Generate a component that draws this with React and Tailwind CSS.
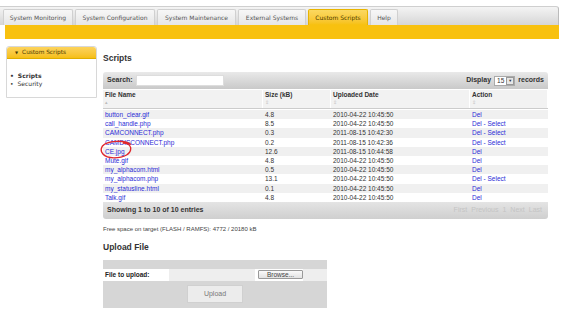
import React from 'react';

const tabs = [
  { label: 'System Monitoring', w: 'w-[70px]' },
  { label: 'System Configuration', w: 'w-[80px]' },
  { label: 'System Maintenance', w: 'w-[79px]' },
  { label: 'External Systems', w: 'w-[68px]' },
  { label: 'Custom Scripts', w: 'w-[60px]', active: true },
  { label: 'Help', w: 'w-[28px]' },
];

const rows = [
  ['button_clear.gif', '4.8', '2010-04-22 10:45:50', false],
  ['call_handle.php', '8.5', '2010-04-22 10:45:50', true],
  ['CAMCONNECT.php', '0.3', '2011-08-15 10:42:30', true],
  ['CAMDISCONNECT.php', '0.2', '2011-08-15 10:42:36', true],
  ['CE.jpg', '12.6', '2011-08-15 10:44:58', false],
  ['Mute.gif', '4.8', '2010-04-22 10:45:50', false],
  ['my_alphacom.html', '0.5', '2010-04-22 10:45:50', false],
  ['my_alphacom.php', '13.1', '2010-04-22 10:45:50', true],
  ['my_statusline.html', '0.1', '2010-04-22 10:45:50', false],
  ['Talk.gif', '4.8', '2010-04-22 10:45:50', false],
];

const cols = ['w-[160px]', 'w-[68px]', 'w-[139px]', 'w-[78px]'];

export default function App() {
  return (
    <div className="w-[561px] h-[311px] bg-white overflow-hidden font-['Liberation_Sans',Arial,sans-serif] text-[#222]">
      {/* TOP TABS */}
      <div className="pt-[6px] pr-[2px]">
        <div className="flex items-end h-[19px] bg-gradient-to-b from-[#f4f4f4] to-[#d6d6d6] border-t border-[#cfcfcf] border-r border-r-[#bbb] rounded-tr-[3px] pl-[3px] font-['DejaVu_Sans',Verdana,sans-serif] text-[6px]">
          {tabs.map(t => (
            <div
              key={t.label}
              className={`${t.w} h-[16px] mr-[2px] flex items-center justify-center rounded-t-[2px] border border-b-0 whitespace-nowrap ${t.active ? 'bg-gradient-to-b from-[#fbd860] to-[#f7c10a] border-[#e8b400] text-[#4a3a00]' : 'bg-gradient-to-b from-[#f7f7f7] to-[#e6e6e6] border-[#d0d0d0] text-[#555]'}`}
            >
              {t.label}
            </div>
          ))}
        </div>
        <div className="ml-[5px] h-[14px] bg-[#f8c10f]" />
      </div>

      <div className="flex gap-[6px] pl-[6px] pt-[7px]">
        {/* SIDEBAR */}
        <div className="w-[91px] shrink-0">
          <div className="h-[52px] rounded-t-[3px] border border-[#d8d8d8] font-['DejaVu_Sans',Verdana,sans-serif]">
            <div className="h-[12px] rounded-t-[3px] bg-gradient-to-b from-[#fcd35a] to-[#f6bf10] border-b border-[#e0ad00] flex items-center pl-[8px] text-[5.8px] text-[#4a3a00]">
              <span className="text-[4px] mr-[4px]">▼</span>Custom Scripts
            </div>
            <div className="pt-[13px] pl-[3px] text-[6px] leading-[8px] text-[#333]">
              <div className="font-bold"><span className="mr-[4px]">•</span>Scripts</div>
              <div><span className="mr-[4px]">•</span>Security</div>
            </div>
          </div>
        </div>

        {/* MAIN */}
        <div className="w-[445px]">
          <div className="h-[26px] pt-[7px] text-[8.5px] font-bold text-[#333] leading-[10px]">Scripts</div>

          <div className="relative">
            {/* search bar */}
            <div className="h-[17px] rounded-t-[3px] bg-gradient-to-b from-[#e9e9e9] to-[#c9c9c9] flex items-center justify-between px-[4px] text-[7px] font-bold text-[#333]">
              <div className="flex items-center gap-[3px]">
                Search:
                <div className="w-[88px] h-[11px] bg-white border border-[#ddd]" />
              </div>
              <div className="flex items-center gap-[3px]">
                Display
                <div className="flex items-center h-[10px] bg-white border border-[#aaa] text-[6.5px] font-normal">
                  <span className="px-[2px]">15</span>
                  <span className="w-[8px] h-[8px] bg-[#e6e6e6] border border-[#999] flex items-center justify-center text-[4px]">▼</span>
                </div>
                records
              </div>
            </div>

            {/* header */}
            <div className="flex h-[19px] mt-[1px] bg-[#f2f2f2] border-b border-[#ccc] text-[6.5px]">
              {['File Name', 'Size (kB)', 'Uploaded Date', 'Action'].map((h, i) => (
                <div key={h} className={`${cols[i]} pl-[2px] pt-[1px] border-r border-white leading-[8px]`}>
                  <div className="font-bold text-[#333]">{h}</div>
                  <div className="text-[5px] text-[#bbb] leading-[7px]">{i === 0 ? '▴' : '⇳'}</div>
                </div>
              ))}
            </div>

            {/* rows */}
            <div className="mt-[1px] text-[6.5px]">
              {rows.map((r, i) => (
                <div key={r[0]} className={`flex h-[9.2px] leading-[9.2px] ${i % 2 === 0 ? 'bg-[#f0f0f0]' : 'bg-white'}`}>
                  <div className={`${cols[0]} pl-[2px] text-[#2b2bd6]`}>{r[0]}</div>
                  <div className={`${cols[1]} pl-[2px] text-[#333]`}>{r[1]}</div>
                  <div className={`${cols[2]} pl-[2px] text-[#333]`}>{r[2]}</div>
                  <div className={`${cols[3]} pl-[2px] text-[#2b2bd6]`}>{r[3] ? 'Del - Select' : 'Del'}</div>
                </div>
              ))}
            </div>

            {/* footer */}
            <div className="h-[17px] rounded-b-[3px] bg-gradient-to-b from-[#e4e4e4] to-[#cfcfcf] flex items-center justify-between pl-[4px] pr-[6px]">
              <span className="text-[7px] font-bold text-[#333]">Showing 1 to 10 of 10 entries</span>
              <span className="flex gap-[4px] text-[7px] text-[#c4c4c4]">
                <span>First</span><span>Previous</span><span>1</span><span>Next</span><span>Last</span>
              </span>
            </div>

            {/* red circle annotation */}
            <svg className="absolute left-[-4px] top-[68px] w-[38px] h-[21px]" viewBox="0 0 36 20" fill="none">
              <path d="M30 4 C24 0 8 0 3 6 C0 11 4 17 14 17 C24 17 31 13 30 7 C29 4 26 3 23 3" stroke="#e0262b" strokeWidth="1.3" strokeLinecap="round" />
            </svg>
          </div>

          <div className="mt-[6px] text-[6px] text-[#444] leading-[8px]">Free space on target (FLASH / RAMFS): 4772 / 20180 kB</div>

          <div className="mt-[9px] text-[8.5px] font-bold text-[#333] leading-[10px]">Upload File</div>

          {/* upload box */}
          <div className="mt-[8px] w-[224px] bg-[#d6d6d6]">
            <div className="h-[9px]" />
            <div className="flex items-center h-[12px] bg-white text-[6.5px]">
              <div className="w-[66px] pl-[2px] font-bold text-[#222]">File to upload:</div>
              <div className="w-[86px] h-[12px] bg-[#eee]" />
              <div className="ml-[3px] w-[45px] h-[9px] border border-[#999] rounded-[1px] bg-gradient-to-b from-[#fafafa] to-[#e2e2e2] flex items-center justify-center text-[#444]">Browse...</div>
              <div className="flex-1 h-[12px] bg-[#eee]" />
            </div>
            <div className="h-[27px] flex items-center justify-center">
              <div className="w-[56px] h-[18px] bg-[#ececec] border border-[#d0d0d0] flex items-center justify-center text-[7px] text-[#777]">Upload</div>
            </div>
          </div>
        </div>
      </div>
    </div>
  );
}
